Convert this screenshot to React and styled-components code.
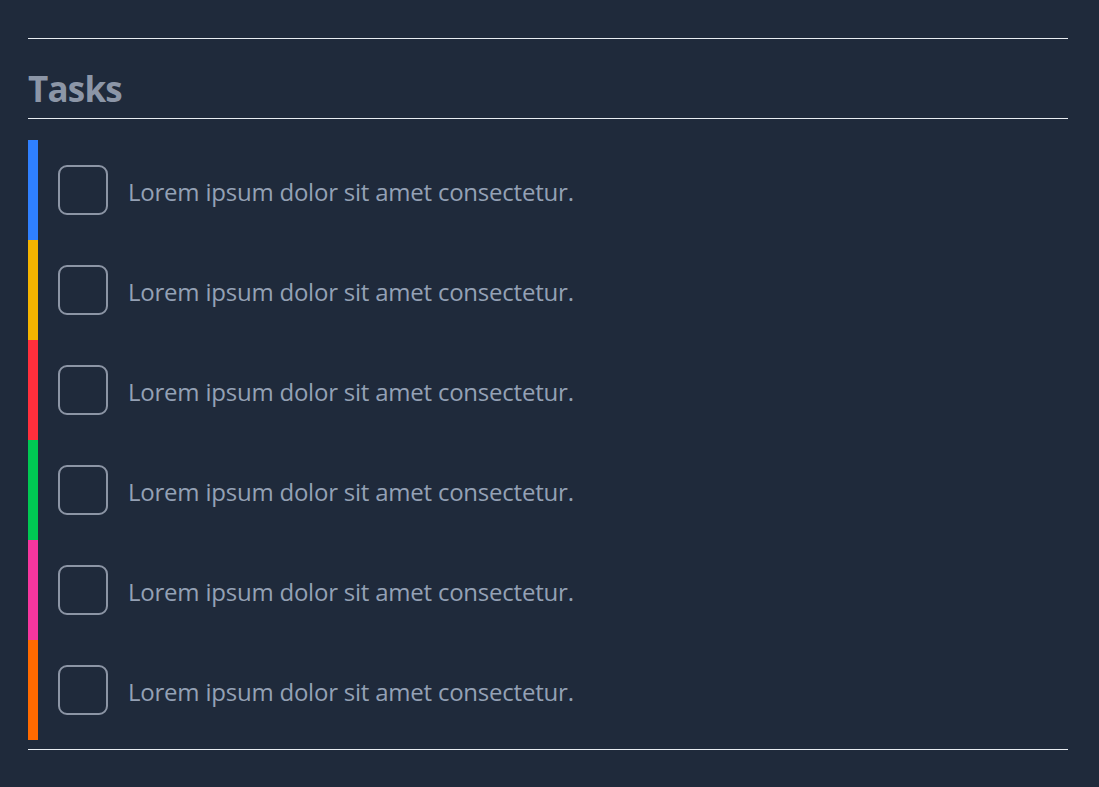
import React from "react";
import styled, { createGlobalStyle } from "styled-components";

const Global = createGlobalStyle`
  html, body { margin: 0; padding: 0; background: #1f2a3b; }
  body { font-family: "Open Sans", "Noto Sans", sans-serif; }
`;

const Page = styled.main`
  width: 1040px;
  padding: 38px 0 0 28px;
`;

const Rule = styled.hr`
  border: none;
  height: 1px;
  background: #e8ecf1;
  margin: 0;
`;

const Title = styled.h2`
  margin: 0;
  height: 79px;
  display: flex;
  align-items: flex-end;
  box-sizing: border-box;
  font-size: 35px;
  font-weight: 700;
  color: #8c96a7;
  letter-spacing: -0.8px;
  line-height: 1;
  padding-bottom: 12px;
`;

const List = styled.ul`
  list-style: none;
  margin: 21px 0 9px;
  padding: 0;
`;

const Row = styled.li`
  height: 100px;
  display: flex;
  align-items: center;
  gap: 20px;
  border-left: 10px solid ${(p) => p.$color};
  padding-left: 20px;
  box-sizing: border-box;
`;

const Box = styled.span`
  width: 50px;
  height: 50px;
  box-sizing: border-box;
  border: 2px solid #8c95a5;
  border-radius: 9px;
  flex-shrink: 0;
`;

const Label = styled.span`
  font-size: 24px;
  color: #94a1b5;
  letter-spacing: -0.22px;
  line-height: 1;
  padding-top: 4px;
`;

const tasks = ["#2f80ff", "#f5b400", "#ff2f3c", "#00c853", "#f6369e", "#ff6a00"];

export default function App() {
  return (
    <>
      <Global />
      <Page>
        <Rule />
        <Title>Tasks</Title>
        <Rule />
        <List>
          {tasks.map((c, i) => (
            <Row key={i} $color={c}>
              <Box />
              <Label>Lorem ipsum dolor sit amet consectetur.</Label>
            </Row>
          ))}
        </List>
        <Rule />
      </Page>
    </>
  );
}
